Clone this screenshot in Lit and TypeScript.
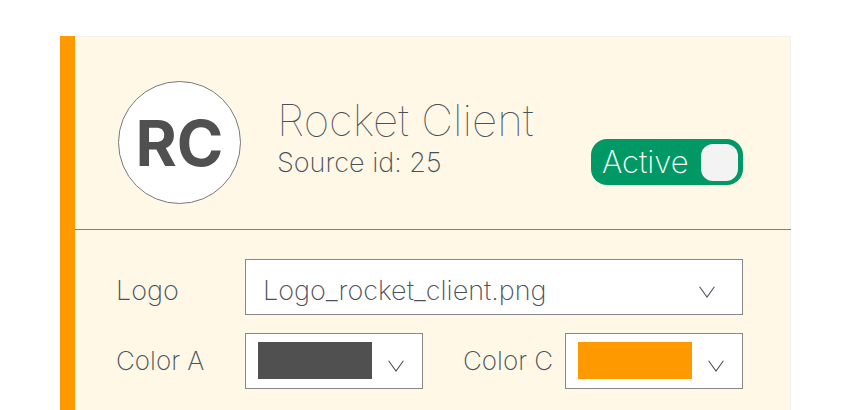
import { LitElement, html, css } from "lit";
import { customElement, property } from "lit/decorators.js";

const chevron = html`<svg class="chevron" viewBox="0 0 16 12" aria-hidden="true">
  <path d="M.6 .8 8 11 15.4 .8" fill="none" stroke="#4b5058" stroke-width="1.1" />
</svg>`;

@customElement("color-select")
class ColorSelect extends LitElement {
  @property() label = "";
  @property() color = "";

  static styles = css`
    :host { display: grid; grid-template-columns: subgrid; align-items: center; }
    label { font-size: 26px; }
    .field {
      display: grid;
      grid-template-columns: 1fr 16px;
      align-items: center;
      gap: 16px;
      height: 56px;
      box-sizing: border-box;
      padding: 0 18px 0 12px;
      border: 1px solid #85878a;
      background: #fff;
    }
    select {
      grid-area: 1 / 1 / 2 / 3;
      appearance: none;
      width: 100%;
      height: 36px;
      border: 0;
      background: transparent;
      color: transparent;
    }
    .swatch { grid-area: 1 / 1; height: 37px; margin-bottom: 1px; pointer-events: none; }
    .chevron { grid-area: 1 / 2; width: 16px; height: 12px; margin-top: 10px; pointer-events: none; }
  `;

  render() {
    return html`<label for="color">${this.label}</label>
      <div class="field">
        <select id="color"><option value=${this.color}></option></select>
        <span class="swatch" style="background:${this.color}"></span>
        ${chevron}
      </div>`;
  }
}

@customElement("app-root")
class AppRoot extends LitElement {
  static styles = css`
    :host {
      display: block;
      box-sizing: border-box;
      min-height: 100vh;
      padding: 36px 60px 0;
      background: #fff;
      color: #4b5058;
      font: 200 27px/32px Inter, "Liberation Sans", sans-serif;
    }
    .panel {
      box-sizing: border-box;
      min-height: calc(100vh - 36px);
      border-left: 15px solid #f90;
      background: #fff8e7;
      box-shadow: inset -1px 1px #f3f1ee;
    }
    header {
      display: flex;
      align-items: center;
      box-sizing: border-box;
      padding: 45px 48px 25px 43px;
      border-bottom: 1px solid #7f8180;
    }
    .avatar {
      display: grid;
      place-items: center;
      flex: none;
      box-sizing: border-box;
      width: 123px;
      height: 123px;
      border: 1px solid #77797c;
      border-radius: 50%;
      background: #fff;
      color: #505050;
      font-size: 63px;
      font-weight: 700;
      line-height: 60px;
    }
    .client { flex: 1; margin-left: 36px; padding-bottom: 13px; }
    h1 { margin: 0; font-size: 44px; font-weight: 100; line-height: 54px; }
    p { margin: 0; }
    .toggle {
      display: flex;
      align-items: center;
      justify-content: space-between;
      align-self: flex-end;
      box-sizing: border-box;
      width: 152px;
      height: 46px;
      margin-bottom: 19px;
      padding: 0 5px 0 11px;
      border-radius: 16px;
      background: #096;
      color: #fff;
      font-size: 31px;
    }
    .knob {
      appearance: none;
      width: 37px;
      height: 37px;
      margin: 0;
      border-radius: 12px;
      background: #f3f3f3;
    }
    form {
      display: grid;
      grid-template-columns: 129px 178px 40px 1fr 178px;
      align-items: center;
      row-gap: 18px;
      padding: 29px 48px 20px 41px;
    }
    .first { grid-column: 1 / 3; }
    .second { grid-column: 4 / 6; }
    .file { display: grid; grid-column: 2 / -1; align-items: center; }
    .file select {
      grid-area: 1 / 1;
      appearance: none;
      box-sizing: border-box;
      width: 100%;
      height: 56px;
      padding: 7px 60px 0 17px;
      border: 1px solid #85878a;
      border-radius: 0;
      background: #fff;
      color: inherit;
      font: inherit;
    }
    .file .chevron {
      grid-area: 1 / 1;
      justify-self: end;
      width: 16px;
      height: 12px;
      margin: 10px 28px 0 0;
      pointer-events: none;
    }
    .name { padding-top: 7px; }
  `;

  render() {
    return html`<main class="panel">
      <header>
        <div class="avatar">RC</div>
        <div class="client">
          <h1>Rocket Client</h1>
          <p>Source id: 25</p>
        </div>
        <label class="toggle">Active<input class="knob" type="checkbox" role="switch" checked /></label>
      </header>
      <form>
        <label class="name" for="logo">Logo</label>
        <div class="file">
          <select id="logo"><option>Logo_rocket_client.png</option></select>
          ${chevron}
        </div>
        <color-select class="first" label="Color A" color="#505050"></color-select>
        <color-select class="second" label="Color C" color="#ff9900"></color-select>
      </form>
    </main>`;
  }
}
